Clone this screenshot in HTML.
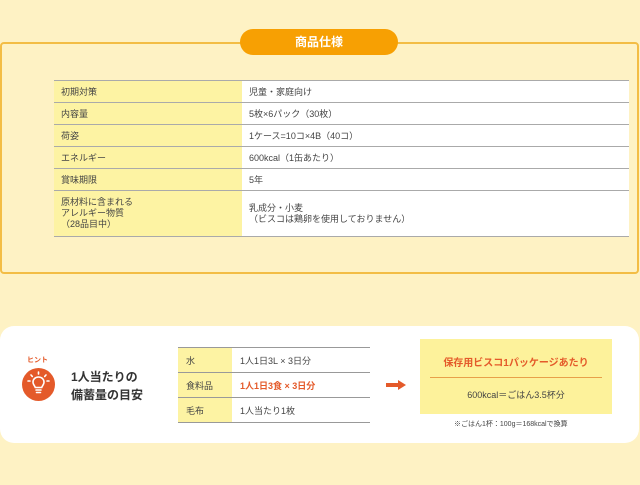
<!DOCTYPE html>
<html><head><meta charset="utf-8"><style>
*{margin:0;padding:0;box-sizing:border-box}
body{width:640px;height:485px;background:#fef2c4;font-family:"Liberation Sans","Noto Sans CJK JP",sans-serif;position:relative;overflow:hidden;color:#444}
.panel{position:absolute;left:0;top:42px;width:639px;height:232px;border:2px solid #f3bd45;border-radius:4px}
.pill{position:absolute;left:240px;top:29px;width:158px;height:26px;background:#f7a003;border-radius:13px;color:#fff;font-weight:bold;font-size:12px;text-align:center;line-height:26px}
table{border-collapse:collapse;position:absolute}
.spec{left:54px;top:80px;width:575px;font-size:9px}
.spec td{border-top:1px solid #aaa;border-bottom:1px solid #aaa;padding:0 7px;height:22px;vertical-align:middle}
.spec td:first-child{background:#fdf3a3;width:188px}
.spec td:last-child{background:#fff}
.card{position:absolute;left:0;top:326px;width:639px;height:117px;background:#fff;border-radius:14px}
.icon{position:absolute;left:22px;top:368px;width:33px;height:33px;border-radius:50%;background:#e45a2a}
.hint{position:absolute;left:27px;top:355px;font-size:7px;color:#e45a2a;font-weight:bold}
.ttl{position:absolute;left:71px;top:368px;font-size:12px;font-weight:bold;line-height:18px;color:#333}
.st{left:178px;top:347px;width:192px;font-size:9px}
.st td{border-top:1px solid #999;border-bottom:1px solid #999;height:25px;padding:0 8px}
.st td:first-child{background:#fdf3a3;width:54px}
.arrow{position:absolute;left:386px;top:380px}
.ybox{position:absolute;left:420px;top:339px;width:192px;height:75px;background:#fdf29b}
.ybox .h{color:#e45a2a;font-weight:bold;font-size:10px;text-align:center;margin-top:15px}
.ybox .ln{margin:8px 10px 0;border-top:1px solid #e8a04a}
.ybox .v{font-size:9px;text-align:center;margin-top:10px}
.note{position:absolute;left:454px;top:419px;font-size:7px;color:#444}
</style></head><body>
<div class="panel"></div>
<div class="pill">商品仕様</div>
<table class="spec">
<tr><td>初期対策</td><td>児童・家庭向け</td></tr>
<tr><td>内容量</td><td>5枚×6パック（30枚）</td></tr>
<tr><td>荷姿</td><td>1ケース=10コ×4B（40コ）</td></tr>
<tr><td>エネルギー</td><td>600kcal（1缶あたり）</td></tr>
<tr><td>賞味期限</td><td>5年</td></tr>
<tr><td style="height:46px;line-height:11px">原材料に含まれる<br>アレルギー物質<br>（28品目中）</td><td style="line-height:11px">乳成分・小麦<br>（ビスコは鶏卵を使用しておりません）</td></tr>
</table>
<div class="card"></div>
<div class="hint">ヒント</div>
<div class="icon"><svg width="33" height="33" viewBox="0 0 33 33"><g stroke="#fff" stroke-width="1.6" fill="none" stroke-linecap="round"><path d="M16.5 9c-3.5 0-5.5 2.5-5.5 5.2 0 2.3 1.8 3.5 2.3 5.3h6.4c.5-1.8 2.3-3 2.3-5.3C22 11.5 20 9 16.5 9z"/><path d="M14 22h5M14.5 24.5h4"/><path d="M16.5 4v2M9 7l1.3 1.4M24 7l-1.3 1.4M6 13h2M25 13h2"/></g></svg></div>
<div class="ttl">1人当たりの<br>備蓄量の目安</div>
<table class="st">
<tr><td>水</td><td>1人1日3L × 3日分</td></tr>
<tr><td>食料品</td><td style="color:#e45a2a;font-weight:bold">1人1日3食 × 3日分</td></tr>
<tr><td>毛布</td><td>1人当たり1枚</td></tr>
</table>
<svg class="arrow" width="20" height="10" viewBox="0 0 20 10"><path d="M0 3h12V0l8 5-8 5V7H0z" fill="#e45a2a"/></svg>
<div class="ybox"><div class="h">保存用ビスコ1パッケージあたり</div><div class="ln"></div><div class="v">600kcal＝ごはん3.5杯分</div></div>
<div class="note">※ごはん1杯：100g＝168kcalで換算</div>
</body></html>
